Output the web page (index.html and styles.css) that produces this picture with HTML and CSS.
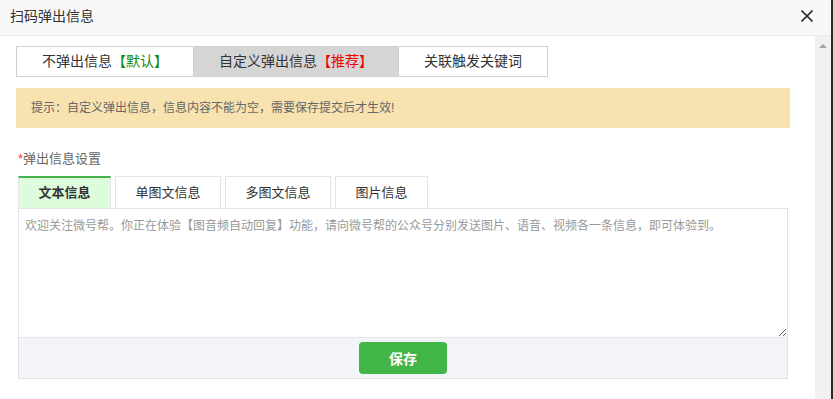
FILE: index.html
```html
<!DOCTYPE html>
<html>
<head>
	<meta charset='utf-8'>
	<title>扫码弹出信息</title>
	<link rel="stylesheet" href="styles.css">
</head>
<body>
	<div id="frame">
		<div id="dialog">
			<div class="head">
				<span class="head-title">扫码弹出信息</span>
				<span class="close">
					<svg width="12" height="12" viewBox="0 0 12 12"><path d="M0.5 0.5L11.5 11.5M11.5 0.5L0.5 11.5" stroke="#2f2f3a" stroke-width="1.6"/></svg>
				</span>
			</div>
			<div class="main">
				<div class="content">
					<div class="switch">
						<div class="switch-item">不弹出信息<span class="tag-green">【默认】</span></div>
						<div class="switch-item on">自定义弹出信息<span class="tag-red">【推荐】</span></div>
						<div class="switch-item">关联触发关键词</div>
					</div>
					<div class="notice">提示：自定义弹出信息，信息内容不能为空，需要保存提交后才生效!</div>
					<div class="form">
						<div class="label"><span class="star">*</span>弹出信息设置</div>
						<div class="tabs">
							<div class="tab on">文本信息</div>
							<div class="tab">单图文信息</div>
							<div class="tab">多图文信息</div>
							<div class="tab">图片信息</div>
						</div>
						<div class="box">
							<textarea class="msg">欢迎关注微号帮。你正在体验【图音频自动回复】功能，请向微号帮的公众号分别发送图片、语音、视频各一条信息，即可体验到。</textarea>
							<div class="box-foot">
								<button class="save">保存</button>
							</div>
						</div>
					</div>
				</div>
				<div class="scroll">
					<div class="arrow-up"></div>
				</div>
			</div>
		</div>
		<div class="edge"></div>
	</div>
</body>
</html>
```

FILE: styles.css
```css
html, body {margin:0; padding:0; height:100%;}
body {
	font-family: "Liberation Sans", "Noto Sans CJK SC", sans-serif;
	font-size: 12px;
	color: #333;
	background: #fff;
	overflow: hidden;
}
div#frame{
	display: flex;
	height: 100%;
}
div#dialog{
	flex: 1;
	display: flex;
	flex-direction: column;
	min-width: 0;
}
div.edge{
	width: 2px;
	background: #2a2a2a;
}
div.head{
	height: 35px;
	border-bottom: 1px solid #e8e8e8;
	background: #f8f8f8;
	display: flex;
	align-items: center;
	justify-content: space-between;
	padding: 0 18px 0 10px;
}
span.head-title{
	font-size: 14px;
	color: #333;
	line-height: 20px;
	margin-top: -4px;
}
span.close{
	display: flex;
	margin-top: -3px;
}
div.main{
	flex: 1;
	display: flex;
	min-height: 0;
}
div.content{
	flex: 1;
	padding: 10px 25px 0 16px;
}
div.scroll{
	width: 16px;
	background: #f1f1f1;
	display: flex;
	justify-content: center;
}
div.arrow-up{
	width: 0;
	height: 0;
	margin-top: 8px;
	border-left: 4px solid transparent;
	border-right: 4px solid transparent;
	border-bottom: 4px solid #a3a3a3;
}
div.switch{
	display: inline-flex;
	border: 1px solid #cfcfcf;
}
div.switch-item{
	height: 29px;
	line-height: 29px;
	padding: 0 25px;
	font-size: 14px;
	color: #333;
	border-left: 1px solid #cfcfcf;
}
div.switch-item:first-child{
	border-left: none;
}
div.switch-item.on{
	background: #d5d5d5;
}
span.tag-green{color: #118a11;}
span.tag-red{color: #f20000;}
div.notice{
	margin-top: 11px;
	height: 40px;
	line-height: 40px;
	background: #f8e3b0;
	color: #666;
	padding-left: 15px;
}
div.form{
	margin: 22px 2px 0 2px;
}
div.label{
	font-size: 13px;
	color: #666;
	line-height: 18px;
}
span.star{color: #f03c3c;}
div.tabs{
	display: flex;
	gap: 4px;
	margin-top: 8px;
}
div.tab{
	height: 31px;
	line-height: 31px;
	padding: 0 19.5px;
	border: 1px solid #e5e5e5;
	border-bottom: none;
	font-size: 13px;
	color: #333;
	text-align: center;
}
div.tab.on{
	border-top: 2px solid #44b14a;
	height: 30px;
	line-height: 30px;
	background: #ddfcdc;
	font-weight: bold;
}
div.box{
	border: 1px solid #e3e3e6;
}
textarea.msg{
	display: block;
	width: 100%;
	box-sizing: border-box;
	height: 129px;
	margin: 0;
	border: none;
	border-bottom: 1px solid #e6e6ea;
	padding: 8px 6px;
	font-family: "Liberation Sans", "Noto Sans CJK SC", sans-serif;
	font-size: 12px;
	line-height: 18px;
	color: #999;
	resize: vertical;
	outline: none;
}
div.box-foot{
	height: 40px;
	background: #f3f4f8;
	display: flex;
	justify-content: center;
	align-items: center;
}
button.save{
	width: 88px;
	height: 32px;
	border: none;
	border-radius: 4px;
	background: #42b549;
	color: #fff;
	font-family: "Liberation Sans", "Noto Sans CJK SC", sans-serif;
	font-size: 14px;
	font-weight: bold;
}
```
